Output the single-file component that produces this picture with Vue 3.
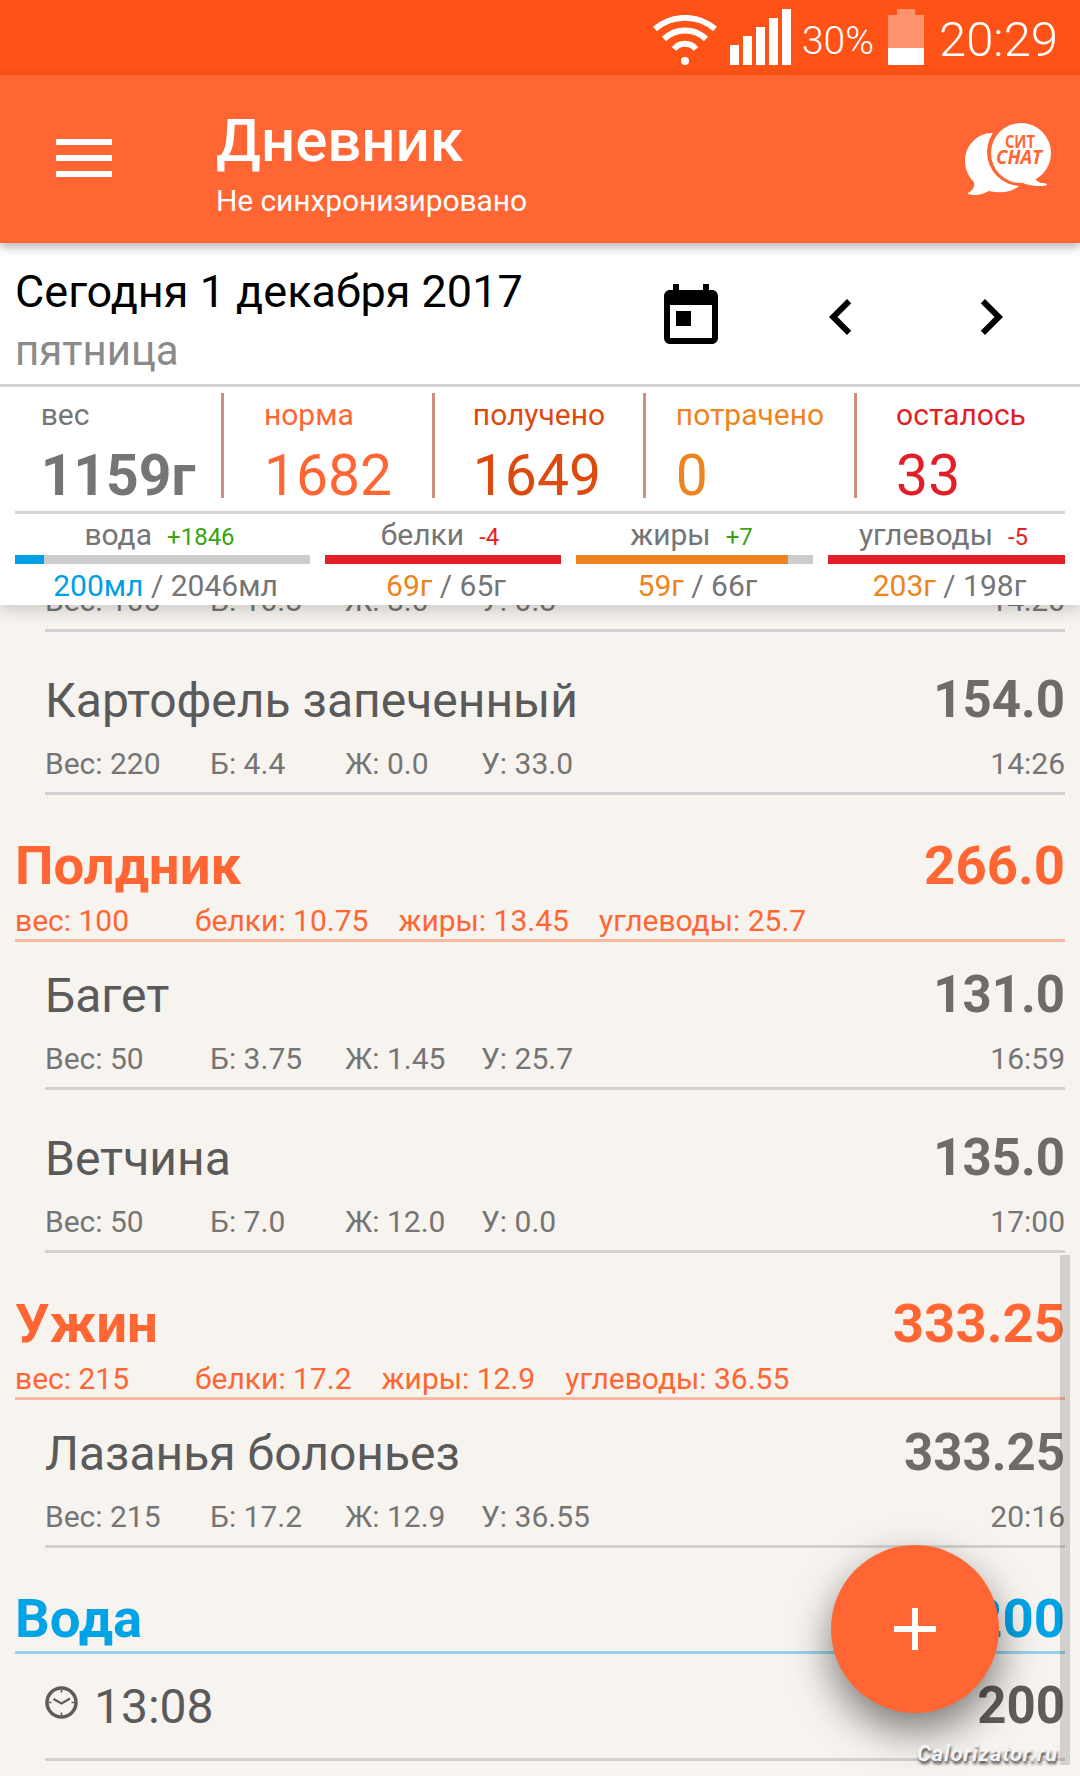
<template>
  <div class="screen">
    <div class="status-bar">
      <svg class="wifi" width="66" height="50" viewBox="0 0 66 50">
        <g fill="none" stroke="#fff" stroke-width="6">
          <path d="M3 14 A46 46 0 0 1 63 14" />
          <path d="M12 24 A30 30 0 0 1 54 24" />
          <path d="M22 34 A14 14 0 0 1 44 34" />
        </g>
        <circle cx="33" cy="46" r="4" fill="#fff" />
      </svg>
      <svg class="signal" width="61" height="56" viewBox="0 0 61 56">
        <rect v-for="(h, i) in signalBars" :key="i" :x="i * 13" :y="56 - h" width="9" :height="h" fill="#fff" />
      </svg>
      <span class="percent">30%</span>
      <svg class="battery" width="36" height="56" viewBox="0 0 36 56">
        <path d="M9 0h18v6h9v33H0V6h9z" fill="#fff" fill-opacity="0.38" />
        <rect x="0" y="39" width="36" height="17" fill="#fff" />
      </svg>
      <span class="clock-text">20:29</span>
    </div>

    <div class="toolbar">
      <div class="burger"><span></span><span></span><span></span></div>
      <div class="toolbar-titles">
        <div class="toolbar-title">Дневник</div>
        <div class="toolbar-sub">Не синхронизировано</div>
      </div>
      <svg class="chat" width="86" height="72" viewBox="0 0 86 72">
        <path d="M27 10C12 10 0 23 0 38c0 9 4 16 9 21 1 5-2 9-6 11-1 2 3 2 7 2 5 0 10-2 14-4 12 3 24 1 31-6 4-4 6-9 6-14L40 10z" fill="#fff" />
        <circle cx="56" cy="29" r="34" fill="#ff6633" />
        <path d="M70 54c1 4 4 6 8 6 3 0 4 1 4 2-5 2-18 1-24-2z" fill="#fff" />
        <circle cx="56" cy="30" r="30" fill="#fff" />
        <text x="55" y="25" class="chat-top" textLength="30" lengthAdjust="spacingAndGlyphs" text-anchor="middle">СИТ</text>
        <text x="54" y="41" class="chat-bottom" textLength="46" lengthAdjust="spacingAndGlyphs" text-anchor="middle">CHAT</text>
      </svg>
    </div>

    <div class="panel">
      <div class="date-row">
        <div class="date-text">
          <div class="date-title">Сегодня 1 декабря 2017</div>
          <div class="date-sub">пятница</div>
        </div>
        <div class="date-actions">
          <svg width="72" height="72" viewBox="0 0 24 24">
            <path d="M19 3h-1V1h-2v2H8V1H6v2H5c-1.11 0-1.99.9-1.99 2L3 19c0 1.1.89 2 2 2h14c1.1 0 2-.9 2-2V5c0-1.1-.9-2-2-2zm0 16H5V8h14v11zM7 10h5v5H7z" />
          </svg>
          <svg width="72" height="72" viewBox="0 0 24 24">
            <path d="M15.41 7.41L14 6l-6 6 6 6 1.41-1.41L10.83 12z" />
          </svg>
          <svg width="72" height="72" viewBox="0 0 24 24">
            <path d="M10 6L8.59 7.41 13.17 12l-4.58 4.58L10 18l6-6z" />
          </svg>
        </div>
      </div>

      <div class="stats">
        <div v-for="s in stats" :key="s.label" class="stat">
          <div class="stat-inner" :class="s.cls">
            <div class="stat-label">{{ s.label }}</div>
            <div class="stat-value">{{ s.value }}</div>
          </div>
        </div>
      </div>

      <div class="macros">
        <div v-for="m in macros" :key="m.label" class="macro">
          <div class="macro-label">
            {{ m.label }}<span class="macro-delta" :class="m.deltaCls">{{ m.delta }}</span>
          </div>
          <div class="macro-bar">
            <div class="macro-fill" :class="m.fillCls" :style="{ width: m.percent + '%' }"></div>
          </div>
          <div class="macro-value">
            <span :class="m.fillCls + '-text'">{{ m.got }}</span> / {{ m.goal }}
          </div>
        </div>
      </div>
    </div>

    <div class="list">
      <div class="item item-cut">
        <div class="item-meta">
          <span class="col-w">Вес: 100</span>
          <span class="col-b">Б: 10.8</span>
          <span class="col-j">Ж: 8.0</span>
          <span>У: 0.8</span>
          <span class="item-time">14:20</span>
        </div>
      </div>

      <template v-for="row in rows" :key="row.key">
        <div v-if="row.type === 'group'" class="group" :class="row.cls">
          <div class="group-top">
            <span>{{ row.title }}</span>
            <span>{{ row.kcal }}</span>
          </div>
          <div v-if="row.meta" class="group-meta">
            <span class="group-weight">{{ row.meta[0] }}</span>
            <span>{{ row.meta[1] }}</span>
            <span>{{ row.meta[2] }}</span>
            <span>{{ row.meta[3] }}</span>
          </div>
        </div>
        <div v-else class="item" :class="{ 'item-next': row.next }">
          <div class="item-top">
            <span>{{ row.name }}</span>
            <span class="item-kcal">{{ row.kcal }}</span>
          </div>
          <div class="item-meta">
            <span class="col-w">{{ row.w }}</span>
            <span class="col-b">{{ row.b }}</span>
            <span class="col-j">{{ row.j }}</span>
            <span>{{ row.u }}</span>
            <span class="item-time">{{ row.time }}</span>
          </div>
        </div>
      </template>

      <div class="water-row">
        <span class="water-time">
          <svg class="water-clock" width="33" height="33" viewBox="0 0 33 33">
            <circle cx="16.5" cy="16.5" r="14.5" fill="none" stroke="#5c5c5c" stroke-width="3.5" />
            <path d="M8.5 13l8 4.5 8.5-5" fill="none" stroke="#5c5c5c" stroke-width="2.2" />
            <path d="M16.5 4v2.5M16.5 26.5V29M4 16.5h2.5M26.5 16.5H29" stroke="#5c5c5c" stroke-width="1.6" />
          </svg>
          13:08
        </span>
        <span class="item-kcal">200</span>
      </div>
    </div>

    <div class="scrollbar"></div>
    <div class="fab"><span class="fab-h"></span><span class="fab-v"></span></div>
    <div class="watermark">Calorizator.ru</div>
  </div>
</template>

<script setup>
const signalBars = [20, 29, 38, 47, 56]

const stats = [
  { label: 'вес', value: '1159г', cls: 'stat-weight' },
  { label: 'норма', value: '1682', cls: 'stat-norm' },
  { label: 'получено', value: '1649', cls: 'stat-got' },
  { label: 'потрачено', value: '0', cls: 'stat-spent' },
  { label: 'осталось', value: '33', cls: 'stat-left' },
]

const macros = [
  { label: 'вода', delta: '+1846', deltaCls: 'plus', percent: 9.8, fillCls: 'blue', got: '200мл', goal: '2046мл' },
  { label: 'белки', delta: '-4', deltaCls: 'minus', percent: 100, fillCls: 'red', got: '69г', goal: '65г' },
  { label: 'жиры', delta: '+7', deltaCls: 'plus', percent: 89.5, fillCls: 'orange', got: '59г', goal: '66г' },
  { label: 'углеводы', delta: '-5', deltaCls: 'minus', percent: 100, fillCls: 'red', got: '203г', goal: '198г' },
]

const rows = [
  { key: 'potato', type: 'item', next: true, name: 'Картофель запеченный', kcal: '154.0', w: 'Вес: 220', b: 'Б: 4.4', j: 'Ж: 0.0', u: 'У: 33.0', time: '14:26' },
  { key: 'snack', type: 'group', title: 'Полдник', kcal: '266.0', meta: ['вес: 100', 'белки: 10.75', 'жиры: 13.45', 'углеводы: 25.7'] },
  { key: 'baguette', type: 'item', name: 'Багет', kcal: '131.0', w: 'Вес: 50', b: 'Б: 3.75', j: 'Ж: 1.45', u: 'У: 25.7', time: '16:59' },
  { key: 'ham', type: 'item', next: true, name: 'Ветчина', kcal: '135.0', w: 'Вес: 50', b: 'Б: 7.0', j: 'Ж: 12.0', u: 'У: 0.0', time: '17:00' },
  { key: 'dinner', type: 'group', title: 'Ужин', kcal: '333.25', meta: ['вес: 215', 'белки: 17.2', 'жиры: 12.9', 'углеводы: 36.55'] },
  { key: 'lasagna', type: 'item', name: 'Лазанья болоньез', kcal: '333.25', w: 'Вес: 215', b: 'Б: 17.2', j: 'Ж: 12.9', u: 'У: 36.55', time: '20:16' },
  { key: 'water', type: 'group', cls: 'group-water', title: 'Вода', kcal: '200' },
]
</script>

<style>
html,
body {
  margin: 0;
  background: #f7f3ef;
}
</style>

<style scoped>
.screen {
  position: relative;
  width: 1080px;
  height: 1776px;
  overflow: hidden;
  display: flex;
  flex-direction: column;
  background: #f7f3ef;
  font-family: Roboto, "Noto Sans", sans-serif;
}

.status-bar {
  height: 75px;
  box-sizing: border-box;
  padding: 0 22px 10px 0;
  display: flex;
  justify-content: flex-end;
  align-items: flex-end;
  background: #ff5216;
  color: #fff;
}
.signal {
  margin-left: 12px;
}
.percent {
  margin: 0 14px 6px 11px;
  font-size: 39px;
  font-weight: 300;
  line-height: 36px;
}
.clock-text {
  margin: 0 0 2px 15px;
  font-size: 49px;
  font-weight: 300;
  line-height: 46px;
}

.toolbar {
  position: relative;
  z-index: 3;
  height: 168px;
  display: flex;
  background: #ff6633;
  color: #fff;
  box-shadow: 0 4px 10px rgba(0, 0, 0, 0.3);
}
.burger {
  width: 56px;
  margin: 64px 104px 0 56px;
}
.burger span {
  display: block;
  height: 6px;
  margin-bottom: 10px;
  background: #fff;
}
.toolbar-titles {
  padding-top: 31px;
  flex: 1;
}
.toolbar-title {
  font-size: 60px;
  font-weight: 500;
  line-height: 70px;
}
.toolbar-sub {
  margin-top: 7px;
  font-size: 30px;
  line-height: 36px;
  letter-spacing: -0.1px;
}
.chat {
  margin: 48px 29px 0 0;
}
.chat-top {
  font: bold 18px "Open Sans", sans-serif;
  fill: #ff6633;
}
.chat-bottom {
  font: italic bold 20px "Open Sans", sans-serif;
  fill: #ff6633;
}

.panel {
  position: relative;
  z-index: 2;
  background: #fff;
  box-shadow: 0 6px 14px rgba(0, 0, 0, 0.16);
}
.date-row {
  height: 141px;
  display: flex;
  justify-content: space-between;
  border-bottom: 3px solid #d4d4d4;
}
.date-text {
  padding: 23px 0 0 15px;
}
.date-title {
  font-size: 45px;
  line-height: 52px;
  color: #000;
}
.date-sub {
  margin-top: 11px;
  font-size: 42px;
  line-height: 44px;
  color: #8a8a8a;
}
.date-actions {
  display: flex;
  gap: 78px;
  padding: 38px 53px 0 0;
}

.stats {
  height: 105px;
  margin: 6px 15px 13px;
  display: grid;
  grid-template-columns: 206px repeat(4, 1fr);
  grid-template-rows: 105px;
}
.stat {
  display: flex;
  justify-content: center;
  border-left: 3px solid #cf8f7e;
}
.stat:first-child {
  border-left: 0;
}
.stat-label {
  margin: 5px 0 16px;
  font-size: 30px;
  line-height: 34px;
}
.stat-value {
  font-size: 57px;
  line-height: 56px;
}
.stat-weight {
  color: #757575;
}
.stat-weight .stat-value {
  font-weight: 700;
}
.stat-norm {
  color: #ff6633;
}
.stat-got {
  color: #dd4a10;
}
.stat-spent {
  color: #ee8420;
}
.stat-left {
  color: #e21f27;
}

.macros {
  margin: 0 15px;
  padding: 6px 0 1px;
  border-top: 3px solid #d4d4d4;
  display: grid;
  grid-template-columns: 295px 236px 237px 237px;
  column-gap: 15px;
}
.macro {
  text-align: center;
  color: #757575;
}
.macro-label {
  height: 30px;
  padding-right: 6px;
  font-size: 30px;
  line-height: 30px;
}
.macro-delta {
  margin-left: 15px;
  font-size: 24px;
}
.plus {
  color: #3aa30f;
}
.minus {
  color: #e21f27;
}
.macro-bar {
  height: 9px;
  margin-top: 5px;
  background: #cccccc;
}
.macro-fill {
  height: 100%;
}
.blue {
  background: #009fe3;
}
.red {
  background: #e21f27;
}
.orange {
  background: #ee8420;
}
.blue-text {
  color: #009fe3;
}
.red-text,
.orange-text {
  color: #ee8420;
}
.macro-value {
  margin-top: 4px;
  padding-left: 6px;
  font-size: 30px;
  line-height: 36px;
}

.list {
  flex: 1;
  padding: 0 15px;
}

.item {
  margin-left: 30px;
  padding: 25px 0 10px;
  border-bottom: 3px solid #d2d2d2;
}
.item-next {
  margin-top: 15px;
}
.item-cut {
  margin-top: -22px;
  padding-top: 0;
}
.item-top {
  display: flex;
  justify-content: space-between;
  align-items: baseline;
  height: 56px;
  font-size: 48px;
  line-height: 56px;
  color: #5a5a5a;
}
.item-kcal {
  font-size: 51px;
  font-weight: 700;
  color: #6e6b69;
}
.item-meta {
  display: flex;
  margin-top: 18px;
  font-size: 30px;
  line-height: 36px;
  color: #757575;
}
.item-cut .item-meta {
  margin-top: 0;
}
.col-w {
  width: 165px;
}
.col-b {
  width: 135px;
}
.col-j {
  width: 136px;
}
.item-time {
  margin-left: auto;
}

.group {
  padding: 38px 0 0;
  border-bottom: 3px solid #fab8a3;
  color: #ff6633;
}
.group-top {
  display: flex;
  justify-content: space-between;
  font-size: 54.5px;
  font-weight: 700;
  line-height: 64px;
}
.group-meta {
  display: flex;
  gap: 30px;
  margin-top: 6px;
  font-size: 30px;
  line-height: 36px;
}
.group-weight {
  width: 150px;
}
.group-water {
  padding-bottom: 1px;
  border-bottom-color: #96d2e8;
  color: #00a3e6;
}

.water-row {
  display: flex;
  justify-content: space-between;
  align-items: baseline;
  height: 56px;
  margin-left: 30px;
  padding: 24px 0;
  border-bottom: 3px solid #d2d2d2;
  font-size: 48px;
  line-height: 56px;
  color: #5a5a5a;
}
.water-time {
  position: relative;
  padding-left: 49px;
}
.water-clock {
  position: absolute;
  left: 0;
  top: 7px;
}
.water-row .item-kcal {
  color: #5f5c5a;
}

.scrollbar {
  position: absolute;
  left: 1060px;
  top: 1255px;
  width: 10px;
  height: 510px;
  background: rgba(0, 0, 0, 0.14);
}
.fab {
  position: absolute;
  left: 831px;
  top: 1545px;
  width: 168px;
  height: 168px;
  border-radius: 50%;
  background: #ff6633;
  box-shadow: 0 18px 40px rgba(0, 0, 0, 0.5);
}
.fab-h {
  position: absolute;
  left: 63px;
  top: 81px;
  width: 42px;
  height: 6px;
  background: #fff;
}
.fab-v {
  position: absolute;
  left: 81px;
  top: 63px;
  width: 6px;
  height: 42px;
  background: #fff;
}
.watermark {
  position: absolute;
  left: 917px;
  top: 1742px;
  font-size: 22px;
  font-style: italic;
  font-weight: 700;
  line-height: 24px;
  letter-spacing: 0.8px;
  color: #f4f4f4;
  text-shadow: 1px 3px 3px rgba(0, 0, 0, 0.7);
}
</style>
